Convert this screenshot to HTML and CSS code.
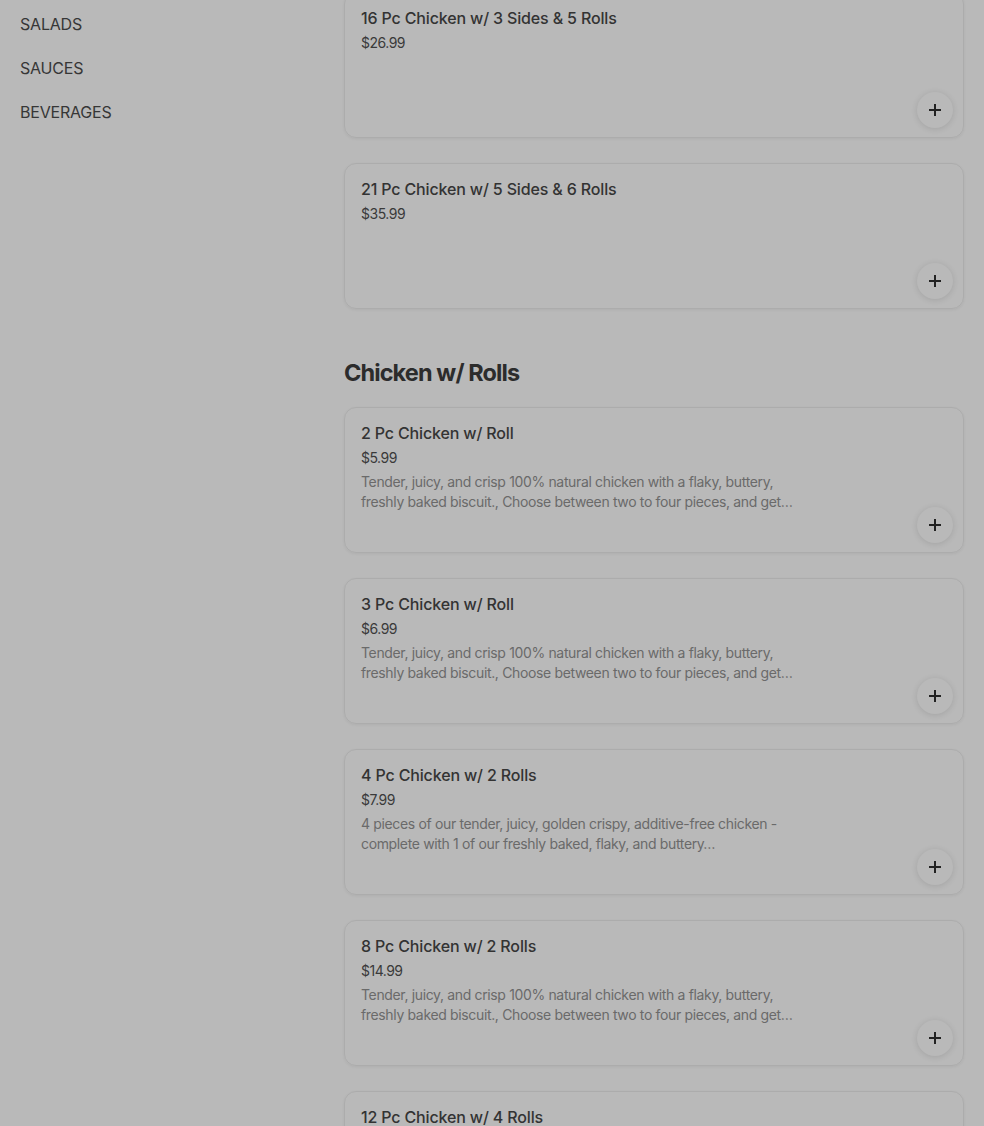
FILE: index.html
```html
<!DOCTYPE html>
<html>
<head>
<meta charset="utf-8">
<link rel="stylesheet" href="styles.css">
</head>
<body>
<div class="page">
  <nav class="sidebar">
    <a class="nav-item">SALADS</a>
    <a class="nav-item">SAUCES</a>
    <a class="nav-item">BEVERAGES</a>
  </nav>
  <main class="menu">
    <section class="section">
      <div class="card">
        <div class="title">16 Pc Chicken w/ 3 Sides &amp; 5 Rolls</div>
        <div class="price">$26.99</div>
        <button class="add"><svg viewBox="0 0 12 12" width="12" height="12"><path d="M6 0v12M0 6h12" stroke="#222" stroke-width="2"/></svg></button>
      </div>
      <div class="card">
        <div class="title">21 Pc Chicken w/ 5 Sides &amp; 6 Rolls</div>
        <div class="price">$35.99</div>
        <button class="add"><svg viewBox="0 0 12 12" width="12" height="12"><path d="M6 0v12M0 6h12" stroke="#222" stroke-width="2"/></svg></button>
      </div>
    </section>
    <section class="section">
      <h2 class="heading">Chicken w/ Rolls</h2>
      <div class="card">
        <div class="title">2 Pc Chicken w/ Roll</div>
        <div class="price">$5.99</div>
        <div class="desc">Tender, juicy, and crisp 100% natural chicken with a flaky, buttery, freshly baked biscuit., Choose between two to four pieces, and get…</div>
        <button class="add"><svg viewBox="0 0 12 12" width="12" height="12"><path d="M6 0v12M0 6h12" stroke="#222" stroke-width="2"/></svg></button>
      </div>
      <div class="card">
        <div class="title">3 Pc Chicken w/ Roll</div>
        <div class="price">$6.99</div>
        <div class="desc">Tender, juicy, and crisp 100% natural chicken with a flaky, buttery, freshly baked biscuit., Choose between two to four pieces, and get…</div>
        <button class="add"><svg viewBox="0 0 12 12" width="12" height="12"><path d="M6 0v12M0 6h12" stroke="#222" stroke-width="2"/></svg></button>
      </div>
      <div class="card">
        <div class="title">4 Pc Chicken w/ 2 Rolls</div>
        <div class="price">$7.99</div>
        <div class="desc">4 pieces of our tender, juicy, golden crispy, additive-free chicken - complete with 1 of our freshly baked, flaky, and buttery…</div>
        <button class="add"><svg viewBox="0 0 12 12" width="12" height="12"><path d="M6 0v12M0 6h12" stroke="#222" stroke-width="2"/></svg></button>
      </div>
      <div class="card">
        <div class="title">8 Pc Chicken w/ 2 Rolls</div>
        <div class="price">$14.99</div>
        <div class="desc">Tender, juicy, and crisp 100% natural chicken with a flaky, buttery, freshly baked biscuit., Choose between two to four pieces, and get…</div>
        <button class="add"><svg viewBox="0 0 12 12" width="12" height="12"><path d="M6 0v12M0 6h12" stroke="#222" stroke-width="2"/></svg></button>
      </div>
      <div class="card">
        <div class="title">12 Pc Chicken w/ 4 Rolls</div>
      </div>
    </section>
  </main>
</div>
</body>
</html>
```
FILE: styles.css
```css
html, body {
  margin: 0;
  padding: 0;
  background: #b9b9b9;
  font-family: Inter, "Noto Sans", "Liberation Sans", sans-serif;
  color: #2f2f2f;
  overflow: hidden;
}
.page {
  display: flex;
  align-items: flex-start;
  height: 1126px;
  overflow: hidden;
}
.sidebar {
  width: 324px;
  padding: 12px 0 0 20px;
  display: flex;
  flex-direction: column;
  gap: 20px;
  flex-shrink: 0;
}
.nav-item {
  font-size: 16px;
  line-height: 24px;
  color: #363636;
  letter-spacing: -0.2px;
}
.menu {
  width: 620px;
  margin-top: -8px;
  display: flex;
  flex-direction: column;
  gap: 48px;
}
.section {
  display: flex;
  flex-direction: column;
  gap: 25px;
}
.heading {
  margin: 0 0 -7px;
  font-size: 23.5px;
  line-height: 32px;
  font-weight: 700;
  letter-spacing: -0.9px;
  color: #2c2c2c;
}
.card {
  position: relative;
  box-sizing: border-box;
  height: 146px;
  padding: 15px 16px 0 16px;
  border: 1px solid #acacac;
  border-radius: 12px;
  box-shadow: 0 1px 3px rgba(0,0,0,0.06);
}
.title {
  font-size: 16px;
  line-height: 20px;
  font-weight: 500;
  color: #333;
  letter-spacing: -0.15px;
}
.price {
  margin-top: 5px;
  font-size: 14px;
  line-height: 20px;
  color: #3a3a3a;
  letter-spacing: -0.5px;
}
.desc {
  margin-top: 4px;
  width: 440px;
  font-size: 14px;
  line-height: 20px;
  color: #6a6a6a;
  letter-spacing: -0.35px;
}
.add {
  position: absolute;
  right: 10px;
  bottom: 9px;
  width: 36px;
  height: 36px;
  border-radius: 50%;
  border: none;
  background: #b9b9b9;
  box-shadow: 0 1px 6px rgba(0,0,0,0.12);
  display: flex;
  align-items: center;
  justify-content: center;
  padding: 0;
}
```
